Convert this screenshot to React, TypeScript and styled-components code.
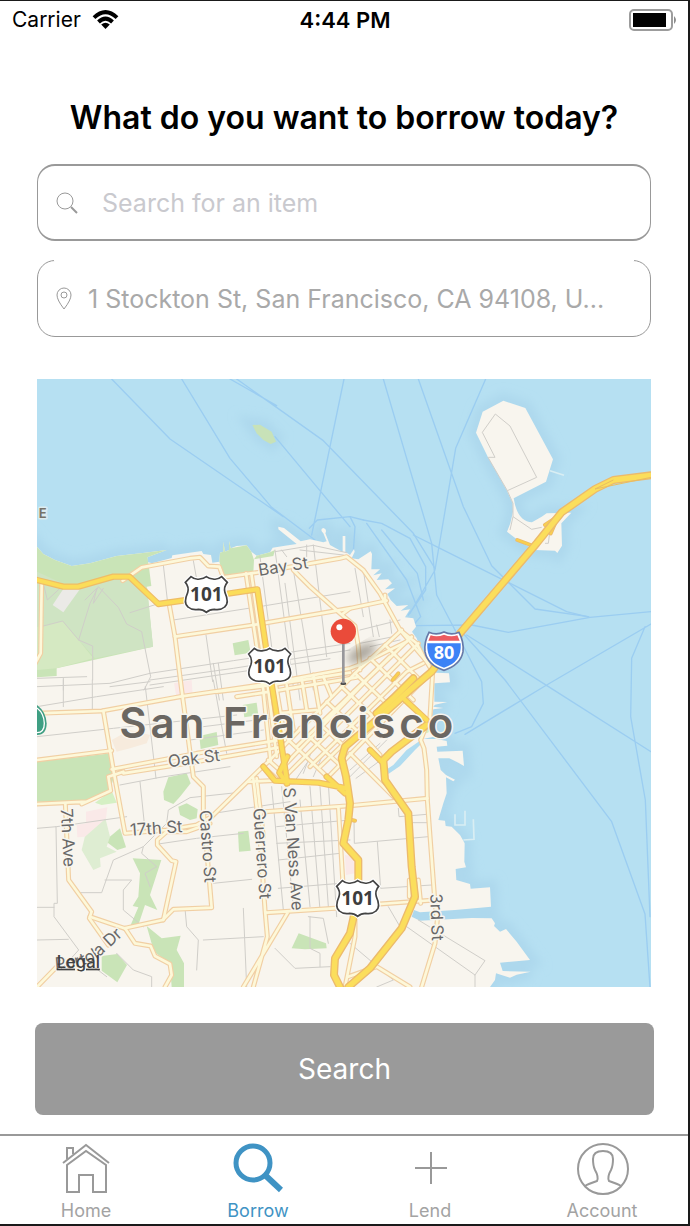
import React from "react";
import styled, { createGlobalStyle } from "styled-components";

const GlobalStyle = createGlobalStyle`
  *, *::before, *::after { box-sizing: border-box; }
  body {
    margin: 0;
    background: #ffffff;
    font-family: Inter, "Liberation Sans", sans-serif;
  }
`;

const grey = "#999999";
const blue = "#3f93c4";

const Screen = styled.div`
  display: flex;
  flex-direction: column;
  min-height: 100vh;
  border: solid #1a1a1a;
  border-width: 1px 2px 2px 0;
`;

const StatusBar = styled.header`
  display: grid;
  grid-template-columns: 1fr auto 1fr;
  align-items: center;
  height: 38px;
  padding: 0 10px 0 12px;
  font-size: 21px;
  line-height: 24px;
  color: #000000;
`;

const Carrier = styled.div`
  display: flex;
  align-items: center;
  gap: 11px;
`;

const Clock = styled.time`
  font-size: 22px;
  font-weight: 600;
`;

const Battery = styled.svg`
  justify-self: end;
`;

const Main = styled.main`
  display: flex;
  flex-direction: column;
  flex: 1;
  padding: 59px 37px 19px;
`;

const Title = styled.h1`
  margin: 0 0 26px;
  font-size: 32px;
  line-height: 40px;
  font-weight: 600;
  text-align: center;
  white-space: nowrap;
  color: #000000;
`;

const Field = styled.label<{ $gap: number; $open?: boolean }>`
  position: relative;
  display: flex;
  align-items: center;
  gap: ${(p) => p.$gap}px;
  height: 77px;
  padding: 0 24px 0 18px;
  margin-bottom: 19px;
  border: solid ${grey};
  border-width: ${(p) => (p.$open ? "1px" : "2px 1px")};
  border-radius: 18px;

  &::before {
    content: "";
    display: ${(p) => (p.$open ? "block" : "none")};
    position: absolute;
    top: -1px;
    left: 16px;
    right: 16px;
    height: 1px;
    background: #ffffff;
  }
`;

const FieldInput = styled.input`
  flex: 1;
  min-width: 0;
  padding: 0;
  border: 0;
  outline: 0;
  background: transparent;
  font: inherit;
  font-size: 25px;
  line-height: 32px;
  color: #a9a9a9;

  &::placeholder {
    color: #c9c9ce;
    opacity: 1;
  }
`;

const MapFrame = styled.div`
  margin: 23px 0 36px;
`;

const MapSvg = styled.svg`
  display: block;
  width: 100%;
  height: auto;
  font-family: Inter, "Liberation Sans", sans-serif;
`;

const SearchButton = styled.button`
  height: 92px;
  margin: 0 -3px 0 -2px;
  border: 0;
  border-radius: 8px;
  background: #9a9a9a;
  font: inherit;
  font-size: 28px;
  color: #ffffff;
`;

const TabBar = styled.nav`
  display: grid;
  grid-template-columns: repeat(4, 1fr);
  height: 90px;
  border-top: 2px solid ${grey};
`;

const Tab = styled.a<{ $active?: boolean }>`
  display: flex;
  flex-direction: column;
  align-items: center;
  gap: 5px;
  padding-top: 7px;
  font-size: 18px;
  line-height: 22px;
  text-decoration: none;
  color: ${(p) => (p.$active ? blue : "#a3a3a3")};
`;

/* Map artwork, drawn on a 1842 x 1824 grid */

const land =
  "M21 530L40 552L75 570L125 588L180 580L260 558L345 548L410 540L352 562L352 576L366 580L425 564L427 556L515 543L520 552L543 555L547 578L568 575L570 548L580 545L580 515L585 545L597 540L597 513L602 535L620 528L650 526L664 545L680 557L720 547L728 533L765 527L800 522L745 478L745 470L762 474L812 514L840 508L880 517L890 514L880 490Q868 478 880 474Q892 476 886 490L900 525L938 546L938 498L946 498L946 545L960 555L972 537L974 545L965 565L985 568L1022 544L1026 552L1024 598L1050 598L1030 616L1055 610L1040 630L1075 628L1086 640L1065 658L1095 655L1072 672L1082 690L1100 708L1135 705L1112 722L1140 718L1125 742L1150 745L1158 770L1146 785L1160 805L1180 855L1198 885L1217 908L1257 910L1260 937L1213 940L1213 995L1252 996L1215 1004L1210 1010L1240 1014L1210 1018L1205 1040L1212 1100L1178 1107L1220 1107L1250 1113L1252 1127L1220 1130L1222 1145L1298 1142L1302 1188L1285 1178L1258 1165L1225 1165L1232 1200L1248 1215L1275 1229L1270 1234L1248 1222L1250 1270L1240 1300L1225 1350L1245 1352L1247 1368L1265 1370L1290 1395L1304 1420L1303 1475L1308 1492L1277 1497L1279 1530L1320 1542L1322 1556L1380 1552L1383 1610L1275 1620L1170 1627L1152 1620L1145 1640L1170 1652L1325 1644L1385 1645L1395 1660L1392 1668L1410 1685L1428 1677L1460 1715L1500 1770L1410 1778L1418 1803L1502 1805L1460 1814L1440 1823L1398 1810L1395 1830L1380 1851H21Z";
const treasure =
  "M1420 92L1486 114L1569 268L1548 335L1451 385Q1462 455 1506 457L1535 440L1550 430L1624 428L1594 460L1596 527L1582 549L1575 542L1515 540L1470 515L1431 485L1441 460L1449 425L1448 400L1430 360L1374 262L1338 188L1358 125Z";

const forests = [
  "M21 530L40 552L75 570L125 588L180 580L260 558L345 548L410 540L352 562L358 600L364 648L350 650L369 830L80 895L80 918L21 922Z",
  "M568 575L570 548L580 545L580 515L585 545L597 540L597 513L602 535L650 526L664 545L672 570L670 608L582 622Z",
  "M680 557L720 547L735 540L730 558L672 568Z",
  "M608 820L655 810L662 848L614 856Z",
  "M508 1098L560 1086L565 1125L512 1137Z",
  "M638 1005L680 998L685 1035L643 1042Z",
  "M21 1175L245 1150L252 1220L240 1260L160 1298L21 1295Z",
  "M400 1265L415 1222L470 1210L482 1240L450 1280L430 1302L402 1290Z",
  "M445 1310L470 1300L503 1318L500 1345L480 1350L450 1335Z",
  "M225 1412L270 1375L288 1432L262 1440Z",
  "M308 1465L394 1470L360 1575L382 1620L345 1605L325 1665L302 1665L325 1612L308 1608L325 1580L330 1510Z",
  "M350 1668L395 1705L452 1697L440 1740L462 1780L462 1851H425L420 1780L372 1745Z",
  "M215 1758L262 1752L291 1785L262 1837L215 1802Z",
  "M785 1735L806 1690L888 1720L890 1735L825 1738Z",
  "M624 1385L655 1382L662 1442L627 1445Z",
];

const local = [
  "M40 768L98 753L146 810L188 828V930M300 728L420 690M146 810L180 700L205 650L265 712L290 762L335 785L362 920L342 960M40 640L52 690L90 655M165 690L200 655L190 700L220 655",
  "M21 950L240 940L360 910L610 872L960 820M21 925L170 920M100 925V960M360 930L610 895L960 840M240 950L360 935M430 750L700 708L960 665M360 945L600 910L900 866",
  "M400 585L412 690M490 572L505 655M528 795L548 935M550 880L568 990M565 880L580 990M690 560L738 930M735 540L790 950M755 540L770 560M830 525V560M850 525L890 860M790 600L850 960M765 640L810 990M735 545L850 526L950 548M810 540L940 555",
  "M975 595L1000 740M1000 600L1030 800M990 780L1110 750M990 820L1090 800M1040 765L1048 800M1080 750L1085 790M1020 830L1110 810",
  "M21 1010L200 980L400 950M21 1100L250 1075L620 1035M187 930V1020M100 930V1010M346 950L378 1225M550 930L590 1150M480 1110L700 1080M520 1070L720 1045",
  "M270 1245L390 1222L600 1190M330 1235L345 1380M21 1375L80 1370L290 1340M78 1370L82 1600H72V1640L146 1740L110 1780L90 1800M21 1612H72M150 1568H215L250 1470L340 1430L410 1360L415 1320L480 1283L620 1268M225 1530H305L280 1560V1620L340 1670M21 1710L115 1708M340 1430L335 1450L380 1490L345 1510L360 1550",
  "M385 1422L500 1405L640 1390M520 1335L680 1310L780 1295M550 1540L665 1528M465 1615L470 1670L505 1710L500 1800M520 1710L700 1700M640 1615L650 1850M735 1735L795 1795L900 1790M260 1750L310 1800L365 1820V1851M175 1778L230 1820",
  "M725 1250L760 1620M755 1250L790 1610M810 1290L840 1610M840 1250L870 1620M870 1250L895 1610M895 1240L920 1640M740 1370L960 1350M740 1420L960 1410M745 1470L930 1450M745 1555L930 1540",
  "M840 1640V1735L870 1750V1790M835 1640L880 1645L895 1720M820 1210L850 1130M850 1220L880 1150M830 1180L790 1240",
  "M972 1350L973 1420L1195 1400M1042 1415L1052 1555L1205 1545M1105 1315L1107 1340L1190 1333M1140 1358H1190M950 1230L1070 1110M978 1225L1080 1150M960 1200L1050 1120M1130 1670L1335 1815V1851M1165 1650L1365 1772L1335 1815M960 1720L1090 1830L1040 1851M1075 1610L1110 1670",
];

const streets = [
  "M278 632L335 592L480 565L510 562L535 588L568 590L580 622L700 605L930 565L950 560L1000 600L1050 670L1110 780L1160 820L1180 860L1208 905L1200 1040L1172 1110L1182 1135L1190 1200L1192 1290L1215 1600L1222 1650L1215 1720L1175 1851",
  "M35 640L32 850L10 890",
  "M418 705L435 800L455 960L490 1220L520 1250V1320L545 1613L430 1618L398 1650L283 1675L180 1640",
  "M435 800L670 765L960 715L1070 692M1065 690V675",
  "M790 600L840 650L930 730L975 768L985 830L990 900M940 730L960 715",
  "M648 610L670 760L700 960L722 1175M664 610L685 760L715 960L740 1160M735 930L765 1110M770 945L790 1080M815 925L830 1020M850 915L870 1030M880 920L905 980",
  "M21 1030L215 1023L450 980L690 945L960 895L1000 880L1130 815M560 965L690 950L960 908M620 980L720 965L980 922M740 1030L860 1020",
  "M220 1023L250 1200L285 1390L410 1380L500 1365L545 1340L700 1188L710 1180L975 910L1115 780",
  "M21 1170L245 1142M245 1198L500 1150L760 1108M280 1210L500 1175L760 1130M280 1205L235 1220L242 1262L155 1302M21 1302L170 1295",
  "M106 1300L116 1530L185 1625L178 1645L235 1725M100 1770L21 1851M285 1675L315 1720L362 1728L375 1758L420 1782L425 1815L405 1851M400 1650L438 1475L425 1472L382 1425V1410L410 1385L470 1385L540 1360",
  "M655 1235L770 1230M670 1225L690 1400L705 1620L712 1700L670 1851M680 1225L700 1400M775 1625L640 1851M710 1628L960 1612L1050 1602L1215 1590M705 1325L960 1307L1192 1285M925 1310L940 1560",
  "M750 1200L1015 925L1145 800M765 1220L1050 935L1165 820M800 1130L1080 860M840 1190L1130 905L1180 880M870 1190L1150 920M895 1220L1180 930",
  "M775 1110L900 1228M810 1075L930 1185M845 1040L950 1135M890 995L1000 1100M935 950L1040 1050M975 910L1090 1020M1020 865L1150 990M1065 825L1170 930M1110 780L1195 880",
  "M700 1190L745 1232M715 1170L760 1210M960 1150L1095 1285M950 1130L1120 960M1000 1100L1050 1155",
  "M955 1820L1040 1790L1140 1851M975 1650V1700L945 1851M1138 1530V1580M1165 1530L1172 1600",
];

const highways = [
  "M21 630L100 650H145L250 620H298L385 702L470 690L600 670L682 658L718 900L752 1110L772 1240",
  "M700 1190L735 1232L865 1238L950 1255M772 1160L748 1208L770 1240M890 1220L945 1270M1120 985L1190 1050M1020 1140L1060 1180",
];

const ramps = ["M1462 510L1510 528M1545 465L1575 445M1562 490L1575 460M1105 910L1088 930M965 1350L975 1352"];

const freeways = [
  "M1863 316L1750 330L1695 357L1595 427L1520 520L1290 790L1205 905L1140 960L1040 1050L945 1130L935 1165L948 1220L960 1300L955 1350L940 1420L985 1470V1550L970 1645L960 1690L915 1765L912 1815L930 1851",
  "M1190 1065L1085 1145L1060 1170L1065 1230L1135 1330L1145 1490L1155 1580L1115 1675L1020 1795L955 1851",
  "M1150 925L1090 985L1040 1030",
];

const ferries = [
  "M245 27L420 207L760 440M455 27L600 265L725 412L855 510M600 27L740 107M620 27L880 212L1150 490L1215 595M735 200L960 470M942 27L845 495M838 475L862 450L960 440L1000 450",
  "M1060 27L1205 520L1220 675L1275 780M1165 27L1300 410L1385 587L1515 717L1675 740M1367 27L1277 235L1215 600L1140 730M960 440L975 470L970 545M1000 450L1055 460L1140 505L1187 590V660L1135 735M1010 460L1130 630L1172 740L1150 765M1055 480L1162 610L1180 690",
  "M1150 495L1230 535L1430 635L1610 725L1680 742L1863 725M1160 767L1325 765L1435 787L1680 742M1290 780L1425 930L1745 1355L1845 1632L1860 1851M1310 795L1540 940L1863 1145M1863 762L1550 945L1305 1093M1845 770L1805 865L1802 1040L1846 1290L1860 1640M1275 780L1355 935L1360 1000L1325 1070L1275 1090",
];

const usShield =
  "M-46 -53Q-34 -43 -20 -46Q-8 -47 0 -53Q8 -47 20 -46Q34 -43 46 -53L63 -36Q51 -22 56 -5Q70 26 55 38Q44 48 24 45Q10 45 0 54Q-10 45 -24 45Q-44 48 -55 38Q-70 26 -56 -5Q-51 -22 -63 -36Z";
const interstate =
  "M-45 -56Q-22 -46 0 -57Q22 -46 45 -56Q60 -28 57 2Q50 42 0 58Q-50 42 -57 2Q-60 -28 -45 -56Z";

const Lines = ({ paths, color, width }: { paths: string[]; color: string; width: number }) => (
  <g fill="none" stroke={color} strokeWidth={width} strokeLinejoin="round" strokeLinecap="round">
    {paths.map((d) => (
      <path key={d} d={d} />
    ))}
  </g>
);

const UsRoute = ({ x, y }: { x: number; y: number }) => (
  <g transform={`translate(${x} ${y})`}>
    <path d={usShield} fill="#ffffff" stroke="#ffffff" strokeWidth="12" />
    <path d={usShield} fill="#ffffff" stroke="#444444" strokeWidth="5" />
    <text y="20" fontSize="57" fontWeight="700" textAnchor="middle" fill="#3d3d3d" fontFamily="'Open Sans', sans-serif">
      101
    </text>
  </g>
);

type Label = { text: string; x: number; y: number; turn: number };

const labels: Label[] = [
  { text: "Bay St", x: 762, y: 606, turn: -9 },
  { text: "Oak St", x: 494, y: 1182, turn: -7 },
  { text: "17th St", x: 380, y: 1392, turn: -4 },
  { text: "7th Ave", x: 97, y: 1404, turn: 87 },
  { text: "Castro St", x: 516, y: 1430, turn: 86 },
  { text: "Guerrero St", x: 679, y: 1452, turn: 86 },
  { text: "S Van Ness Ave", x: 773, y: 1438, turn: 86 },
  { text: "3rd St", x: 1203, y: 1642, turn: 88 },
];

const CityMap = () => (
  <MapSvg viewBox="21 27 1842 1824" role="img" aria-label="Map of San Francisco">
    <defs>
      <filter id="soft" x="-20%" y="-20%" width="140%" height="140%">
        <feGaussianBlur stdDeviation="14" />
      </filter>
      <path id="portola" d="M76 1798Q160 1795 205 1764L310 1668" />
    </defs>
    <rect x="21" y="27" width="1842" height="1824" fill="#b6e0f2" />
    <g fill="none" stroke="#add8ed" strokeWidth="44" filter="url(#soft)">
      <path d={land} />
      <path d={treasure} />
      <path d="M668 165L700 170L735 205L725 218L690 195Z" />
    </g>
    <Lines paths={ferries} color="#9bcdf1" width={4} />
    <path d="M667 165L690 164L725 185L738 215L722 222L700 210L680 190Z" fill="#c8e2b8" />
    <path d={land} fill="#f8f5ee" />
    <path d={treasure} fill="#f8f5ee" />
    <path
      d="M1560 302L1602 316M1275 1333V1365H1305V1322M1330 1348L1332 1408L1300 1410"
      fill="none"
      stroke="#d9eef3"
      strokeWidth="5"
    />
    <path d="M1170 1112L1130 1140L1090 1185L1073 1196L1075 1212L1110 1188L1155 1140L1180 1115Z" fill="#b0dcf0" />
    <path d="M1180 1090L1190 1060L1210 1050L1213 1078L1190 1090Z" fill="#d5f0c4" />
    <g fill="#c9e4b7">
      {forests.map((d) => (
        <path key={d} d={d} />
      ))}
    </g>
    <path d="M21 605L120 650L240 620L300 625L352 655L369 830L195 865L146 810L98 753L21 770Z" fill="#cfe4c3" />
    <path d="M21 770L98 753L146 810L190 865L80 895L21 900Z" fill="#d5e9c2" />
    <path d="M165 1398L225 1340L240 1400L230 1430L260 1445L210 1465L212 1490L190 1500L155 1440Z" fill="#deedd2" />
    <path d="M195 1298L245 1262L260 1298L215 1305Z" fill="#d5f0c4" />
    <path d="M68 705L100 657H150L100 727Z" fill="#ebeae7" />
    <path d="M168 1325L232 1312L228 1345L165 1400L142 1402L140 1365L168 1360ZM432 940L485 930L488 975L440 985ZM945 1455L975 1460V1510L948 1515Z" fill="#fae9e8" />
    <path d="M245 1110L300 1080L360 1095L350 1120L300 1135L260 1145Z" fill="#f7ebdd" />

    <Lines paths={local} color="#d0cec9" width={3} />
    <path
      d="M1375 262L1395 262L1357 187L1396 132L1440 168L1520 322L1432 362M1374 262L1432 362L1449 400V440L1505 478L1535 472M1449 440L1440 480M1545 520H1555L1560 480"
      fill="none"
      stroke="#d0cec9"
      strokeWidth="3"
    />
    <Lines paths={streets} color="#f1cfa3" width={15} />
    <Lines paths={streets} color="#fdf8d9" width={8} />
    <Lines paths={ramps} color="#ecba6c" width={12} />
    <Lines paths={ramps} color="#f9d04f" width={7} />
    <Lines paths={highways} color="#efbd66" width={19} />
    <Lines paths={freeways} color="#ecba6c" width={24} />
    <Lines paths={highways} color="#fbdd59" width={12} />
    <Lines paths={freeways} color="#fbde5c" width={16} />
    <path d="M1863 322L1695 357L1750 330" fill="none" stroke="#e9bd62" strokeWidth="3" />

    <ellipse cx="995" cy="850" rx="48" ry="22" transform="rotate(-30 995 850)" fill="#6b6458" opacity="0.55" filter="url(#soft)" />

    <g fill="#686868" stroke="#f8f5ee" strokeWidth="9" paintOrder="stroke" strokeLinejoin="round" textAnchor="middle">
      {labels.map((l) => (
        <text key={l.text} x={l.x} y={l.y} fontSize="50" transform={`rotate(${l.turn} ${l.x} ${l.y})`}>
          {l.text}
        </text>
      ))}
      <text fontSize="50" textAnchor="start">
        <textPath href="#portola">Portola Dr</textPath>
      </text>
      <text x="38" y="443" fontSize="39" fontWeight="700" fill="#77736a" stroke="#dcecf0">
        E
      </text>
      <text x="775" y="1103" fontSize="126" fontWeight="600" letterSpacing="12" fill="#6b6762">
        San Francisco
      </text>
    </g>
    <a href="#legal">
      <text x="80" y="1793" fontSize="50" fontWeight="500" fill="#3f3f3f" textDecoration="underline">
        Legal
      </text>
    </a>

    <UsRoute x={529} y={673} />
    <UsRoute x={719} y={888} />
    <UsRoute x={983} y={1585} />

    <g transform="translate(1242 843)">
      <path d={interstate} fill="#ffffff" stroke="#6679a8" strokeWidth="5" />
      <path d="M-50 -23H50Q54 35 0 50Q-54 35 -50 -23Z" fill="#3c82f6" />
      <path d="M-40 -47Q-20 -40 0 -49Q20 -40 40 -47L47 -31H-47Z" fill="#ec5b5f" />
      <text y="23" fontSize="54" fontWeight="700" textAnchor="middle" fill="#ffffff" fontFamily="'Noto Sans', sans-serif">
        80
      </text>
    </g>

    <path d="M21 1005Q48 1025 50 1060Q50 1095 21 1095Z" fill="#3f9f83" />
    <path d="M21 1014Q42 1030 43 1060Q43 1088 21 1088" fill="none" stroke="#ffffff" strokeWidth="4" />

    <ellipse cx="940" cy="941" rx="9" ry="4" fill="#444444" />
    <path d="M940 815V940" stroke="#97979b" strokeWidth="8" />
    <circle cx="940" cy="784" r="38" fill="#ea4b3a" />
    <circle cx="928" cy="772" r="9" fill="#ffffff" />
  </MapSvg>
);

export default function App() {
  return (
    <>
      <GlobalStyle />
      <Screen>
        <StatusBar>
          <Carrier>
            Carrier
            <svg width="27" height="20" viewBox="0 0 27 20" aria-hidden="true">
              <g fill="none" stroke="#000000" strokeWidth="4">
                <path d="M2 7.6Q13.5 -3.2 25 7.6" />
                <path d="M6.5 12Q13.5 5.2 20.5 12" />
              </g>
              <path d="M9.2 14.6Q13.5 11 17.8 14.6L13.5 19Z" fill="#000000" />
            </svg>
          </Carrier>
          <Clock>4:44 PM</Clock>
          <Battery width="49" height="22" viewBox="0 0 49 22" aria-hidden="true">
            <rect x="1" y="1" width="42" height="20" rx="4" fill="#ffffff" stroke="#9c9c9c" strokeWidth="2" />
            <rect x="4" y="4" width="33" height="14" fill="#000000" />
            <path d="M45 7Q49 11 45 15Z" fill="#8c8c8c" />
          </Battery>
        </StatusBar>

        <Main>
          <Title>What do you want to borrow today?</Title>

          <Field $gap={24}>
            <svg width="22" height="22" viewBox="0 0 22 22" fill="none" stroke={grey} aria-hidden="true">
              <circle cx="9" cy="9" r="8" />
              <path d="M15 15L21 21" strokeWidth="2" />
            </svg>
            <FieldInput type="search" placeholder="Search for an item" aria-label="Search for an item" />
          </Field>

          <Field $gap={16} $open>
            <svg width="16" height="24" viewBox="0 0 16 24" fill="none" stroke={grey} aria-hidden="true">
              <path d="M8 22Q1 13 1 8A7 7 0 0 1 15 8Q15 13 8 22Z" />
              <circle cx="8" cy="8" r="3" />
            </svg>
            <FieldInput
              type="text"
              readOnly
              value="1 Stockton St, San Francisco, CA 94108, U..."
              aria-label="Location"
            />
          </Field>

          <MapFrame>
            <CityMap />
          </MapFrame>

          <SearchButton type="button">Search</SearchButton>
        </Main>

        <TabBar>
          <Tab href="#home">
            <svg width="50" height="52" viewBox="0 0 50 52" fill="none" stroke={grey} strokeWidth="2" aria-hidden="true">
              <path d="M2 20L25 2L48 20" />
              <path d="M6 49V22L25 8L45 22V49H32V32H18V49Z" />
              <path d="M6 16V5H12V11" />
            </svg>
            Home
          </Tab>
          <Tab href="#borrow" $active>
            <svg width="50" height="52" viewBox="0 0 50 52" fill="none" stroke={blue} aria-hidden="true">
              <circle cx="20" cy="20" r="17" strokeWidth="5" />
              <path d="M32 32L48 47" strokeWidth="6" />
            </svg>
            Borrow
          </Tab>
          <Tab href="#lend">
            <svg width="50" height="52" viewBox="0 0 50 52" fill="none" stroke={grey} strokeWidth="2" aria-hidden="true">
              <path d="M26 9V41M10 25H42" />
            </svg>
            Lend
          </Tab>
          <Tab href="#account">
            <svg width="54" height="52" viewBox="0 0 54 52" fill="none" stroke={grey} strokeWidth="2" aria-hidden="true">
              <circle cx="28" cy="26" r="25" />
              <path d="M10 43Q13 41 22 38Q24 34 20 27Q18 23 18 16Q18 8 28 8Q38 8 38 16Q38 23 36 27Q32 34 34 38Q43 41 46 43" />
            </svg>
            Account
          </Tab>
        </TabBar>
      </Screen>
    </>
  );
}
